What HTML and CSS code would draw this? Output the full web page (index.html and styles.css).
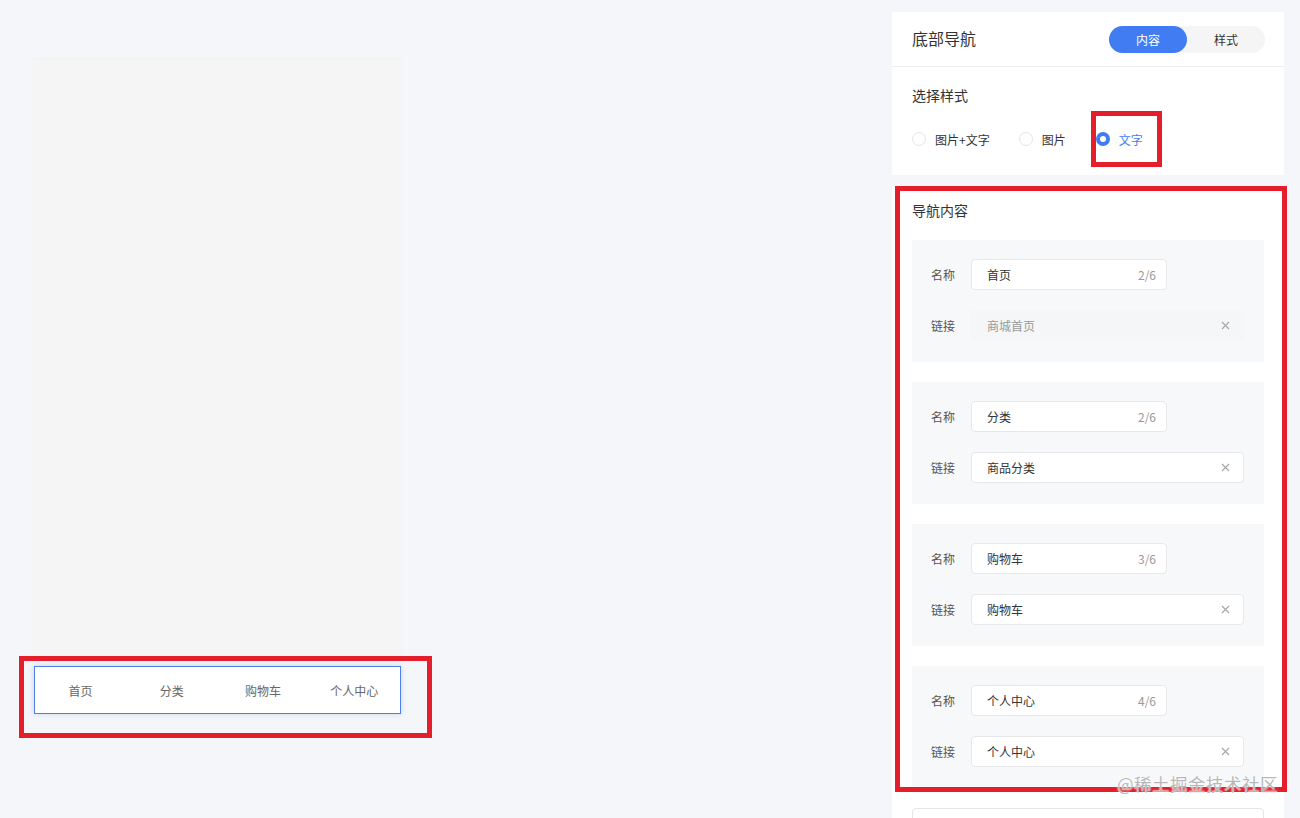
FILE: index.html
```html
<!DOCTYPE html>
<html lang="zh-CN">
<head>
    <meta charset="utf-8">
    <title>底部导航</title>
    <link rel="stylesheet" href="styles.css">
</head>
<body>
<div class="page">
    <section class="preview">
        <div class="phone">
            <nav class="tabbar marked">
                <a class="tabbar-item">首页</a>
                <a class="tabbar-item">分类</a>
                <a class="tabbar-item">购物车</a>
                <a class="tabbar-item">个人中心</a>
            </nav>
        </div>
    </section>

    <aside class="panel">
        <div class="panel-head">
            <h2>底部导航</h2>
            <div class="switch">
                <span class="switch-item active">内容</span>
                <span class="switch-item">样式</span>
            </div>
        </div>

        <div class="block style-block">
            <h3>选择样式</h3>
            <div class="radios">
                <label class="radio"><i class="dot"></i>图片+文字</label>
                <label class="radio"><i class="dot"></i>图片</label>
                <label class="radio checked marked"><i class="dot"></i>文字</label>
            </div>
        </div>

        <div class="block nav-block">
            <div class="nav-content marked">
                <h3>导航内容</h3>
                <div class="nav-list">
                    <div class="nav-card">
                        <div class="field">
                            <span class="field-label">名称</span>
                            <div class="input short"><span>首页</span><span class="count">2/6</span></div>
                        </div>
                        <div class="field">
                            <span class="field-label">链接</span>
                            <div class="input long disabled"><span>商城首页</span>
                                <svg class="clear" width="9" height="9" viewBox="0 0 9 9"><path d="M1 1L8 8M8 1L1 8"/></svg>
                            </div>
                        </div>
                    </div>
                    <div class="nav-card">
                        <div class="field">
                            <span class="field-label">名称</span>
                            <div class="input short"><span>分类</span><span class="count">2/6</span></div>
                        </div>
                        <div class="field">
                            <span class="field-label">链接</span>
                            <div class="input long"><span>商品分类</span>
                                <svg class="clear" width="9" height="9" viewBox="0 0 9 9"><path d="M1 1L8 8M8 1L1 8"/></svg>
                            </div>
                        </div>
                    </div>
                    <div class="nav-card">
                        <div class="field">
                            <span class="field-label">名称</span>
                            <div class="input short"><span>购物车</span><span class="count">3/6</span></div>
                        </div>
                        <div class="field">
                            <span class="field-label">链接</span>
                            <div class="input long"><span>购物车</span>
                                <svg class="clear" width="9" height="9" viewBox="0 0 9 9"><path d="M1 1L8 8M8 1L1 8"/></svg>
                            </div>
                        </div>
                    </div>
                    <div class="nav-card">
                        <div class="field">
                            <span class="field-label">名称</span>
                            <div class="input short"><span>个人中心</span><span class="count">4/6</span></div>
                        </div>
                        <div class="field">
                            <span class="field-label">链接</span>
                            <div class="input long"><span>个人中心</span>
                                <svg class="clear" width="9" height="9" viewBox="0 0 9 9"><path d="M1 1L8 8M8 1L1 8"/></svg>
                            </div>
                        </div>
                    </div>
                </div>
                <div class="watermark">@稀土掘金技术社区</div>
            </div>
            <button class="add-btn">添加导航</button>
        </div>
    </aside>
</div>
</body>
</html>
```

FILE: styles.css
```css
* { box-sizing: border-box }

html, body { height: 100% }

body {
    margin: 0;
    background-color: #f4f6f9;
    font-family: "Noto Sans CJK SC", "Liberation Sans", sans-serif;
    color: #333;
    overflow: hidden;
}

h2, h3 {
    margin: 0;
    font-weight: normal;
}

.page {
    display: flex;
    justify-content: space-between;
}

/* left preview */

.preview { padding: 58px 0 0 33px }

.phone {
    width: 369px;
    height: 657px;
    display: flex;
    flex-direction: column;
    background-color: #f5f5f5;
    border-top: 1px dotted #eceeef;
}

.tabbar {
    margin: auto 1px 1px;
    height: 48px;
    display: flex;
    background-color: white;
    border: 1px solid #4d7ff0;
    box-shadow: 0 0 6px rgba(65, 124, 242, 0.25);
}

.tabbar-item {
    flex: 1;
    display: flex;
    align-items: center;
    justify-content: center;
    font-size: 12px;
    color: #666;
}

/* red annotation boxes */

.marked { position: relative }

.marked::after {
    content: "";
    position: absolute;
    border: 5px solid #e41f2b;
    pointer-events: none;
    z-index: 5;
}

.tabbar::after {
    left: -16px;
    right: -32px;
    top: -11px;
    bottom: -25px;
}

.radio.marked::after {
    left: -5px;
    right: -19px;
    top: -18px;
    bottom: -18px;
}

.nav-content::after {
    left: -17px;
    right: -23px;
    top: -14px;
    bottom: -4px;
}

/* right panel */

.panel {
    width: 392px;
    margin: 12px 16px 0 0;
}

.panel-head {
    height: 55px;
    padding: 0 19px 0 20px;
    display: flex;
    align-items: center;
    justify-content: space-between;
    background-color: white;
    border-bottom: 1px solid #ebedf0;
}

.panel-head h2 {
    font-size: 16px;
    line-height: 22px;
    margin-top: -2px;
    color: #333;
}

.switch {
    display: flex;
    height: 27px;
    border-radius: 14px;
    background-color: #f5f5f5;
}

.switch-item {
    width: 78px;
    display: flex;
    align-items: center;
    justify-content: center;
    font-size: 12px;
    color: #333;
    border-radius: 14px;
}

.switch-item.active {
    background-color: #417cf2;
    color: white;
}

.block {
    background-color: white;
    padding: 20px 20px 0;
}

.block h3 {
    font-size: 14px;
    line-height: 18px;
    color: #333;
}

.style-block {
    height: 108px;
    padding-top: 19px;
}

.radios {
    display: flex;
    margin-top: 25px;
}

.radio {
    display: flex;
    align-items: center;
    height: 20px;
    margin-right: 29px;
    font-size: 12px;
    color: #333;
}

.radio .dot {
    width: 14px;
    height: 14px;
    margin-right: 9px;
    border-radius: 50%;
    border: 1px solid #e3e5e9;
    background-color: white;
}

.radio.checked {
    color: #417cf2;
    margin-left: 1px;
}

.radio.checked .dot {
    border: 4.5px solid #417cf2;
}

.nav-block {
    margin-top: 11px;
    padding-top: 14px;
}

.nav-block h3 {
    line-height: 20px;
    margin-bottom: 20px;
}

.nav-list {
    display: flex;
    flex-direction: column;
    gap: 20px;
}

.nav-card {
    padding: 19px 20px 21px 19px;
    background-color: #f7f8fa;
    display: flex;
    flex-direction: column;
    gap: 20px;
}

.field {
    display: flex;
    align-items: center;
}

.field-label {
    width: 40px;
    font-size: 12px;
    color: #555;
}

.input {
    height: 31px;
    display: flex;
    align-items: center;
    justify-content: space-between;
    padding: 0 10px 0 15px;
    font-size: 12px;
    color: #333;
    background-color: white;
    border: 1px solid #e6e8eb;
    border-radius: 4px;
}

.input.short { width: 196px }

.input.long {
    flex: 1;
    padding-right: 13px;
}

.input.disabled {
    background-color: #f4f6f8;
    border-color: #f4f6f8;
    color: #999;
}

.count { color: #999 }

.clear path {
    stroke: #a6a6a6;
    stroke-width: 1.1;
}

.watermark {
    position: absolute;
    right: -14px;
    bottom: -7px;
    font-size: 17.5px;
    line-height: 22px;
    color: rgba(160, 160, 160, 0.75);
    text-shadow: 0 0 2px white, 0 0 1px white;
    letter-spacing: 0.5px;
    z-index: 6;
}

.add-btn {
    display: block;
    width: 100%;
    height: 32px;
    margin-top: 20px;
    background-color: white;
    border: 1px solid #e3e5e9;
    border-radius: 4px;
    font-family: inherit;
    font-size: 12px;
    color: #333;
}
```
